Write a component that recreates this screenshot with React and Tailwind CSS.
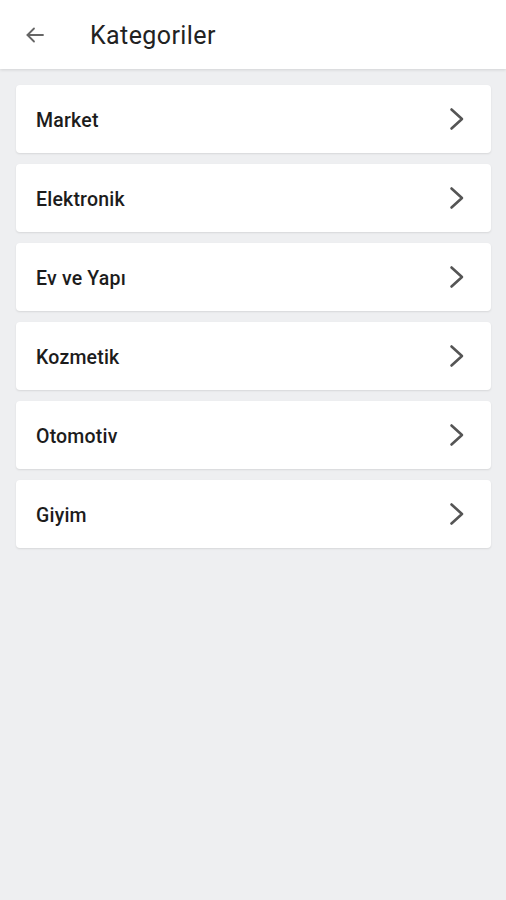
import React from 'react';

const categories = ['Market', 'Elektronik', 'Ev ve Yapı', 'Kozmetik', 'Otomotiv', 'Giyim'];

const BackArrow = () => (
  <svg width="24" height="24" viewBox="0 0 24 24" fill="none" stroke="#666" strokeWidth="1.8" strokeLinecap="round" strokeLinejoin="round">
    <path d="M20 12H4.5" />
    <path d="M11 5.5L4.5 12l6.5 6.5" />
  </svg>
);

const Chevron = () => (
  <svg width="16" height="24" viewBox="0 0 16 24" fill="none" stroke="#555" strokeWidth="2.6" strokeLinecap="round" strokeLinejoin="round">
    <path d="M2.5 2.5L13 12 2.5 21.5" />
  </svg>
);

export default function App() {
  return (
    <div className="min-h-[900px] w-full bg-[#eeeff1] font-['Roboto',sans-serif]">
      {/* Header */}
      <div className="flex h-[69px] items-center bg-white shadow-[0_1px_3px_rgba(0,0,0,0.12)]">
        <div className="ml-[23px] flex w-[24px] items-center">
          <BackArrow />
        </div>
        <h1 className="ml-[43px] mt-[2px] text-[25px] font-normal tracking-[0.4px] text-[#222]">Kategoriler</h1>
      </div>

      {/* List */}
      <div className="flex flex-col gap-[11px] pl-4 pr-[15px] pt-4">
        {categories.map((name) => (
          <div
            key={name}
            className="flex h-[68px] items-center justify-between rounded-[4px] bg-white pl-5 pr-[26px] shadow-[0_1px_2px_rgba(0,0,0,0.1)]"
          >
            <span className="mt-[3px] text-[19.5px] font-medium tracking-[0.2px] text-[#1c1c1c]">{name}</span>
            <Chevron />
          </div>
        ))}
      </div>
    </div>
  );
}
